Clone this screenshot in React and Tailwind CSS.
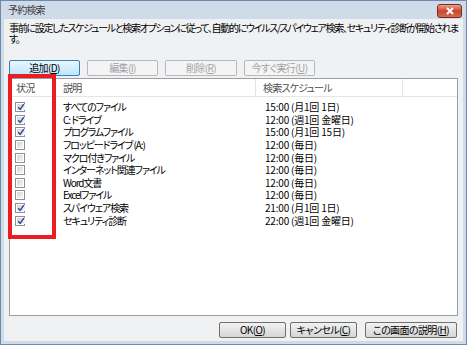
import React from 'react'

const jp = "font-['Noto_Sans_CJK_JP','Noto_Sans',sans-serif] [font-feature-settings:'palt']"

const rows = [
  { on: true, name: 'すべてのファイル', when: '15:00 (月1回 1日)' },
  { on: true, name: 'C: ドライブ', when: '12:00 (週1回 金曜日)' },
  { on: true, name: 'プログラムファイル', when: '15:00 (月1回 15日)' },
  { on: false, name: 'フロッピードライブ (A:)', when: '12:00 (毎日)' },
  { on: false, name: 'マクロ付きファイル', when: '12:00 (毎日)' },
  { on: false, name: 'インターネット関連ファイル', when: '12:00 (毎日)' },
  { on: false, name: 'Word文書', when: '12:00 (毎日)' },
  { on: false, name: 'Excelファイル', when: '12:00 (毎日)' },
  { on: true, name: 'スパイウェア検索', when: '21:00 (月1回 1日)' },
  { on: true, name: 'セキュリティ診断', when: '22:00 (週1回 金曜日)' },
]

const Check = ({ on }) => (
  <span className="w-[10px] h-[10px] border border-[#8e8f8f] bg-white p-[1px] flex">
    <span className="flex-1 bg-gradient-to-br from-[#d4d4d4] to-[#f7f7f7] flex items-center justify-center">
      {on && (
        <svg width="8" height="8" viewBox="0 0 8 8">
          <path d="M1.2 4.2 L3.2 6.3 L6.8 1.2" fill="none" stroke="#2a45a0" strokeWidth="1.4" />
        </svg>
      )}
    </span>
  </span>
)

const Btn = ({ label, k, w, disabled, focus }) => (
  <button
    className={
      'h-[16px] rounded-[2px] border text-[10px] leading-none tracking-[-0.6px] flex items-center justify-center ' +
      w + ' ' +
      (disabled
        ? 'border-[#b5b9bd] bg-[#f4f4f4] text-[#a3a3a3]'
        : focus
        ? 'border-[#3c7fb1] bg-gradient-to-b from-[#eaf6fd] to-[#bee6fd] text-black'
        : 'border-[#707070] bg-gradient-to-b from-[#f2f2f2] to-[#d6d6d6] text-black')
    }
  >
    {label}(<span className="underline">{k}</span>)
  </button>
)

export default function App() {
  return (
    <div className={'w-[467px] h-[345px] overflow-hidden bg-white ' + jp}>
      <div className="w-[467px] h-[345px] border border-[#6e8bae] bg-[#cfdbe8] flex flex-col relative">
        {/* title bar */}
        <div className="h-[18px] flex items-center justify-between pl-[7px] pr-[4px]">
          <span className="text-[10px] leading-none text-[#3d3d3d] tracking-[-0.8px]">予約検索</span>
          <span className="w-[25px] h-[14px] mt-[2px] rounded-[3px] border border-[#7a2a22] bg-gradient-to-b from-[#e8a08c] via-[#c9452f] to-[#d46a4f] flex items-center justify-center">
            <svg width="10" height="8" viewBox="0 0 10 8">
              <path d="M2 1 L8 7 M8 1 L2 7" stroke="#fff" strokeWidth="2" />
            </svg>
          </span>
        </div>

        {/* body */}
        <div className="flex-1 mx-[3px] mb-[3px] bg-[#eff1f3] flex flex-col px-[5px]">
          <p className="text-[10px] leading-[11px] text-black mt-[3px] whitespace-nowrap tracking-[-1.3px]">
            事前に設定したスケジュールと検索オプションに従って、自動的にウイルス/スパイウェア検索、セキュリティ診断が開始されま
            <br />
            す。
          </p>

          <div className="flex gap-[7px] mt-[16px]">
            <Btn label="追加" k="D" w="w-[71px]" focus />
            <Btn label="編集" k="I" w="w-[71px]" disabled />
            <Btn label="削除" k="R" w="w-[72px]" disabled />
            <Btn label="今すぐ実行" k="U" w="w-[71px]" disabled />
          </div>

          {/* list */}
          <div className="mt-[2px] h-[238px] border border-[#9b9ea2] bg-white flex flex-col text-[10px] leading-none">
            <div className="h-[18px] flex border-b border-[#e5e5e5] text-[#4d4d4d] tracking-[-0.8px]">
              <div className="w-[46px] pl-[6px] border-r border-[#e5e5e5] flex items-center">状況</div>
              <div className="w-[200px] pl-[7px] border-r border-[#e5e5e5] flex items-center">説明</div>
              <div className="w-[147px] pl-[7px] border-r border-[#e5e5e5] flex items-center">検索スケジュール</div>
              <div className="flex-1" />
            </div>
            <div className="pt-[4px] flex flex-col">
              {rows.map((r) => (
                <div key={r.name} className="h-[12.6px] flex items-center text-black">
                  <div className="w-[46px] pl-[5px] flex items-center">
                    <Check on={r.on} />
                  </div>
                  <div className="w-[200px] pl-[7px] whitespace-nowrap tracking-[-1.1px]">{r.name}</div>
                  <div className="pl-[9px] whitespace-nowrap tracking-[-0.2px]">{r.when}</div>
                </div>
              ))}
            </div>
          </div>

          <div className="flex justify-end mt-[6px] pr-[1px]">
            <Btn label="OK" k="O" w="w-[67px]" />
            <div className="w-[4px]" />
            <Btn label="キャンセル" k="C" w="w-[67px]" />
            <div className="w-[8px]" />
            <Btn label="この画面の説明" k="H" w="w-[92px]" />
          </div>
        </div>

        {/* red annotation box */}
        <div className="absolute left-[7px] top-[73px] w-[48px] h-[165px] border-4 border-[#ec1c24]" />
      </div>
    </div>
  )
}
